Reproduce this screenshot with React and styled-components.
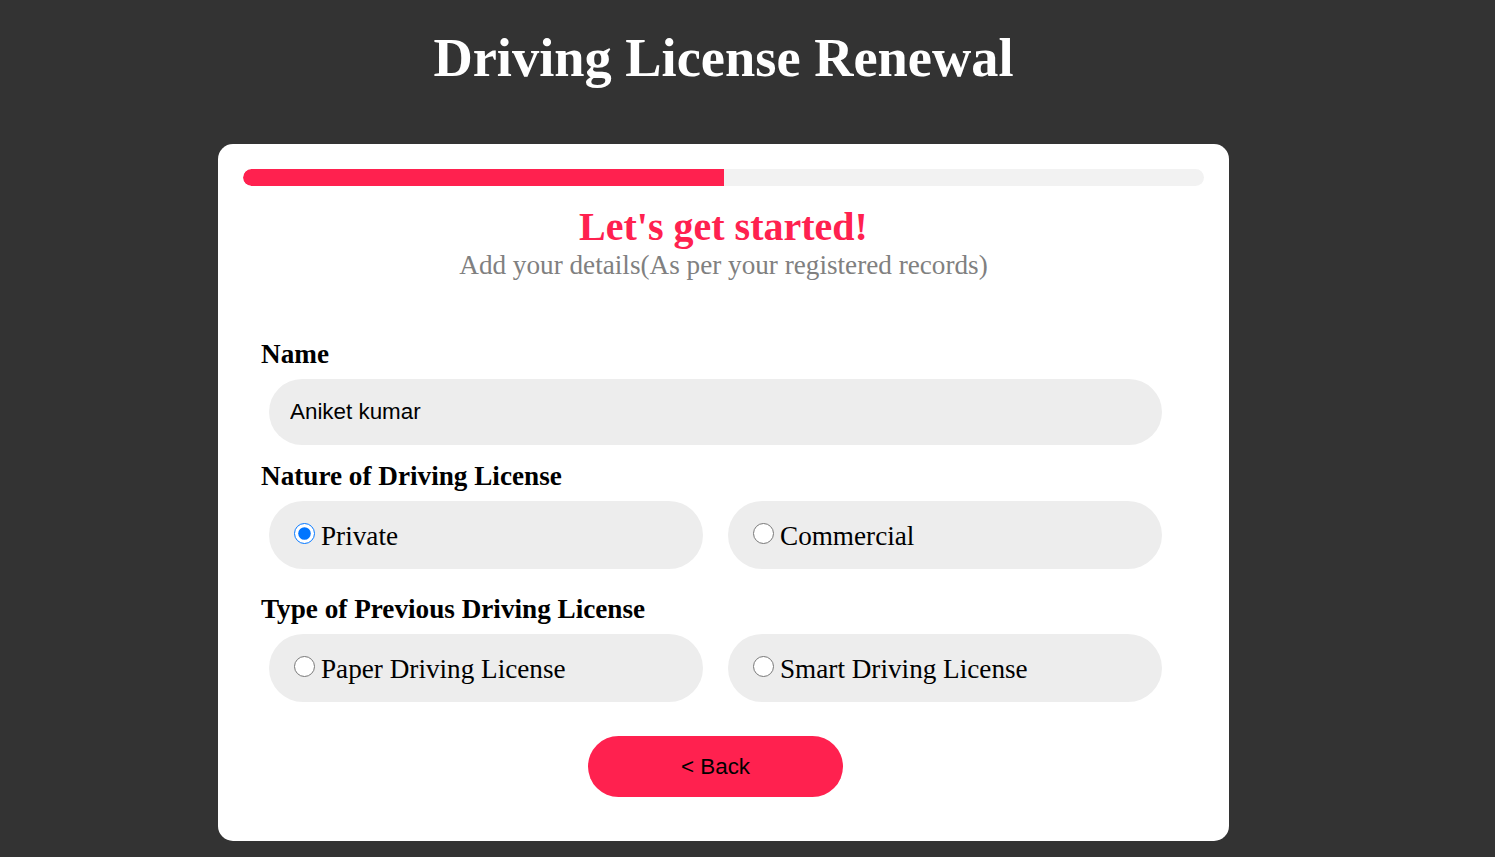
import React, { useState } from "react";
import styled, { createGlobalStyle } from "styled-components";

const GlobalStyle = createGlobalStyle`
  body {
    margin: 0;
    background: #333333;
    font-family: "Liberation Serif", "Times New Roman", serif;
  }
  * {
    box-sizing: border-box;
  }
`;

const Page = styled.div`
  min-height: 857px;
  padding: 27px 48px 16px 0;
  display: flex;
  flex-direction: column;
  align-items: center;
`;

const Title = styled.h1`
  margin: 0 0 55px;
  font-size: 54.4px;
  line-height: 62px;
  font-weight: 700;
  color: #ffffff;
`;

const Card = styled.div`
  width: 1011px;
  background: #ffffff;
  border-radius: 15px;
  padding: 25px 25px 44px;
`;

const Track = styled.div`
  height: 17px;
  border-radius: 9px;
  background: #f2f2f2;
  overflow: hidden;
`;

const Fill = styled.div`
  height: 100%;
  border-radius: 9px 0 0 9px;
  background: #ff214f;
`;

const Heading = styled.h2`
  margin: 19px 0 0;
  text-align: center;
  font-size: 40px;
  line-height: 44px;
  font-weight: 700;
  color: #ff214f;
`;

const Subtitle = styled.p`
  margin: 0;
  text-align: center;
  font-size: 27.2px;
  line-height: 31px;
  padding-top: 1px;
  color: #808080;
`;

const Form = styled.form`
  margin-top: 58px;
  padding-left: 18px;
`;

const Field = styled.div`
  margin-top: ${(p) => p.$top || 0}px;
`;

const Label = styled.div`
  font-size: 27.2px;
  line-height: 30px;
  font-weight: 700;
  color: #000000;
  margin-bottom: 10px;
`;

const Control = styled.div`
  margin-left: 8px;
  width: 893px;
`;

const TextInput = styled.input`
  display: block;
  width: 100%;
  height: 66px;
  border: none;
  outline: none;
  border-radius: 33px;
  background: #ededed;
  padding: 0 21px;
  font-family: "Liberation Sans", Arial, sans-serif;
  font-size: 22.4px;
  color: #000000;
`;

const Options = styled.div`
  display: grid;
  grid-template-columns: 434px 434px;
  gap: 25px;
`;

const Option = styled.label`
  height: 68px;
  border-radius: 34px;
  background: #ededed;
  display: flex;
  align-items: center;
  padding-left: 25px;
  cursor: pointer;
`;

const Radio = styled.input`
  width: 21px;
  height: 21px;
  margin: 0 6px 4px 0;
  accent-color: #0075ff;
`;

const OptionText = styled.span`
  font-size: 27.2px;
  line-height: 30px;
  margin-top: 2px;
  color: #000000;
`;

const ButtonRow = styled.div`
  margin: 34px 0 0 26px;
  width: 893px;
  display: flex;
  justify-content: center;
`;

const BackButton = styled.button`
  width: 255px;
  height: 61px;
  border: none;
  border-radius: 31px;
  background: #ff214f;
  color: #000000;
  font-family: "Liberation Sans", Arial, sans-serif;
  font-size: 22.4px;
  cursor: pointer;
`;

const RadioGroup = ({ name, options, value, onChange }) => (
  <Options>
    {options.map((opt) => (
      <Option key={opt}>
        <Radio
          type="radio"
          name={name}
          checked={value === opt}
          onChange={() => onChange(opt)}
        />
        <OptionText>{opt}</OptionText>
      </Option>
    ))}
  </Options>
);

const App = () => {
  const [name, setName] = useState("Aniket kumar");
  const [nature, setNature] = useState("Private");
  const [type, setType] = useState("");
  const progress = 50;

  return (
    <>
      <GlobalStyle />
      <Page>
        <Title>Driving License Renewal</Title>
        <Card>
          <Track>
            <Fill style={{ width: `${progress}%` }} />
          </Track>
          <Heading>Let's get started!</Heading>
          <Subtitle>Add your details(As per your registered records)</Subtitle>
          <Form onSubmit={(e) => e.preventDefault()}>
            <Field>
              <Label>Name</Label>
              <Control>
                <TextInput value={name} onChange={(e) => setName(e.target.value)} />
              </Control>
            </Field>
            <Field $top={16}>
              <Label>Nature of Driving License</Label>
              <Control>
                <RadioGroup
                  name="nature"
                  options={["Private", "Commercial"]}
                  value={nature}
                  onChange={setNature}
                />
              </Control>
            </Field>
            <Field $top={25}>
              <Label>Type of Previous Driving License</Label>
              <Control>
                <RadioGroup
                  name="type"
                  options={["Paper Driving License", "Smart Driving License"]}
                  value={type}
                  onChange={setType}
                />
              </Control>
            </Field>
          </Form>
          <ButtonRow>
            <BackButton type="button">&lt; Back</BackButton>
          </ButtonRow>
        </Card>
      </Page>
    </>
  );
};

export default App;
